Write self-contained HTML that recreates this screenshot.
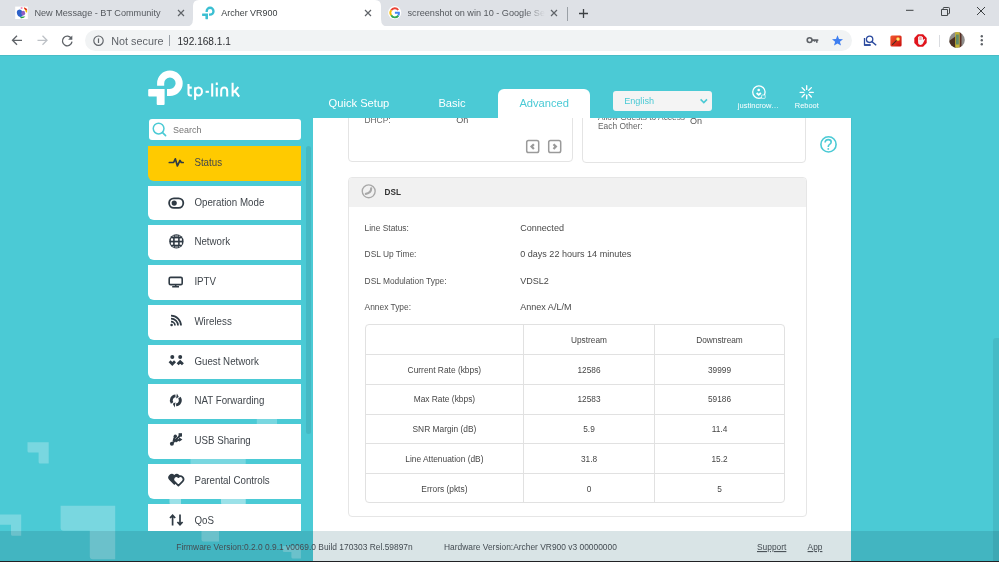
<!DOCTYPE html>
<html><head><meta charset="utf-8"><style>
html,body{margin:0;padding:0;width:999px;height:562px;overflow:hidden;background:#fff}
body{position:relative;font-family:"Liberation Sans",sans-serif}
.t{position:absolute;line-height:1;white-space:nowrap}
.b{position:absolute}
</style></head><body>
<div class="b" style="left:0px;top:0px;width:999px;height:26px;background:#dee1e6"></div>
<svg class="b" style="left:185px;top:0" width="204" height="27" viewBox="0 0 204 27"><path d="M0 27 Q8 27 8 19 L8 6 Q8 0 14 0 L190 0 Q196 0 196 6 L196 19 Q196 27 204 27 Z" fill="#fff"/></svg>
<div class="t" style="left:34.40px;top:9.00px;font-size:9.15px;color:#55595e;transform-origin:0 7px;transform:scaleY(1.06);">New Message - BT Community</div>
<div class="t" style="left:221.30px;top:9.00px;font-size:8.95px;color:#3c4043;transform-origin:0 7px;transform:scaleY(1.06);">Archer VR900</div>
<div class="t" style="left:407.5px;top:9.00px;font-size:9.15px;color:#55595e;width:137px;overflow:hidden;white-space:nowrap;-webkit-mask-image:linear-gradient(90deg,#000 85%,transparent)">screenshot on win 10 - Google Search</div>
<svg class="b" style="left:177px;top:8.5px;" width="8" height="8" viewBox="0 0 8 8"><path d="M1 1L7 7M7 1L1 7" stroke="#5f6368" stroke-width="1.2"/></svg>
<svg class="b" style="left:363.5px;top:8.5px;" width="8" height="8" viewBox="0 0 8 8"><path d="M1 1L7 7M7 1L1 7" stroke="#5f6368" stroke-width="1.2"/></svg>
<svg class="b" style="left:550px;top:8.5px;" width="8" height="8" viewBox="0 0 8 8"><path d="M1 1L7 7M7 1L1 7" stroke="#5f6368" stroke-width="1.2"/></svg>
<svg class="b" style="left:15px;top:6px;" width="13" height="13" viewBox="0 0 13 13"><rect x="0.2" y="0.6" width="12.6" height="12.4" fill="#fff"/><ellipse cx="4.9" cy="7.3" rx="2.9" ry="3.7" fill="#2e62c9" transform="rotate(-18 4.9 7.3)"/><ellipse cx="8.2" cy="7.2" rx="1.9" ry="2.4" fill="#8c5ec4"/><path d="M9.6 1.4 Q12.6 2.6 12.1 6.4 L10.8 6.3 Q10.6 4.2 8.9 2.6Z" fill="#f2c200"/><path d="M9.6 1.4 Q12.3 2.3 12.4 4.3 L10.3 4.0 Q9.7 2.8 8.7 2.1Z" fill="#e02828"/><ellipse cx="6.6" cy="1.9" rx="1.1" ry="0.75" fill="#f060a8"/><path d="M5 11.4 Q7.2 10.1 10.4 10.6 Q8.8 12.5 5.8 12.2Z" fill="#22a244"/></svg>
<svg class="b" style="left:0;top:0" width="260" height="26" viewBox="0 0 260 26"><g transform="translate(202.1 6.6) scale(0.368)"><path d="M12.45 15 V12.5 A9.25 9.25 0 1 1 21.7 21.75 H18.8" stroke="#3bbfd2" stroke-width="6.4" fill="none"/><path d="M1 18.6 H16 V33.2 Q16 34.2 15 34.2 H10 Q9 34.2 9 33.2 V25.3 H1 Q0 25.3 0 24.3 V19.6 Q0 18.6 1 18.6Z" fill="#3bbfd2"/></g></svg>
<svg class="b" style="left:388px;top:6px;" width="14" height="14" viewBox="0 0 14 14"><circle cx="6.7" cy="6.7" r="6.6" fill="#fff"/><path d="M10.2 4.0 A4.2 4.2 0 0 0 3.2 4.2" stroke="#ea4335" stroke-width="1.9" fill="none"/><path d="M3.2 4.2 A4.2 4.2 0 0 0 3.2 9.2" stroke="#fbbc05" stroke-width="1.9" fill="none"/><path d="M3.2 9.2 A4.2 4.2 0 0 0 10.3 9.6" stroke="#34a853" stroke-width="1.9" fill="none"/><path d="M10.3 9.6 A4.2 4.2 0 0 0 10.9 6.7 H6.9" stroke="#4285f4" stroke-width="1.9" fill="none"/></svg>
<div class="b" style="left:566.5px;top:7px;width:1px;height:14px;background:#9aa0a6"></div>
<svg class="b" style="left:578px;top:8px;" width="11" height="11" viewBox="0 0 11 11"><path d="M5.5 1V10M1 5.5H10" stroke="#3c4043" stroke-width="1.3"/></svg>
<svg class="b" style="left:905px;top:8px;" width="10" height="5" viewBox="0 0 10 5"><path d="M1 2.3H8.5" stroke="#3c4043" stroke-width="1"/></svg>
<svg class="b" style="left:940px;top:6px;" width="11" height="11" viewBox="0 0 11 11"><path d="M1.5 3.5H7.5V9.5H1.5Z M3.2 3.5 V2.3 Q3.2 1.5 4 1.5 H8.7 Q9.5 1.5 9.5 2.3 V7 Q9.5 7.8 8.7 7.8 H7.5" stroke="#3c4043" stroke-width="0.95" fill="none"/></svg>
<svg class="b" style="left:976px;top:6px;" width="10" height="10" viewBox="0 0 10 10"><path d="M1 1L9 9M9 1L1 9" stroke="#3c4043" stroke-width="1"/></svg>
<div class="b" style="left:0px;top:26px;width:999px;height:29px;background:#fff"></div>
<div class="b" style="left:84.5px;top:30.2px;width:767px;height:21px;background:#f1f3f4;border-radius:10.5px"></div>
<div class="t" style="left:111.30px;top:36.00px;font-size:10.8px;color:#5f6368;transform-origin:0 9px;transform:scaleY(1.06);">Not secure</div>
<div class="b" style="left:169px;top:34.5px;width:1px;height:11.5px;background:#9aa0a6"></div>
<div class="t" style="left:177.50px;top:37.00px;font-size:10.1px;color:#2a2c30;transform-origin:0 8px;transform:scaleY(1.06);">192.168.1.1</div>
<svg class="b" style="left:10px;top:33px;" width="15" height="15" viewBox="0 0 15 15"><path d="M12 7.3 H3 M7 2.8 L2.5 7.3 L7 11.8" stroke="#5f6368" stroke-width="1.3" fill="none"/></svg>
<svg class="b" style="left:35px;top:33px;" width="15" height="15" viewBox="0 0 15 15"><path d="M2.5 7.3 H11.5 M7.5 2.8 L12 7.3 L7.5 11.8" stroke="#bdc1c6" stroke-width="1.3" fill="none"/></svg>
<svg class="b" style="left:60px;top:33px;" width="15" height="15" viewBox="0 0 15 15"><path d="M11.4 5.6 A4.8 4.8 0 1 0 12 8.6" stroke="#5f6368" stroke-width="1.3" fill="none"/><path d="M12.3 2.6 V6.8 H8.1 Z" fill="#5f6368"/></svg>
<svg class="b" style="left:92px;top:34px;" width="13" height="13" viewBox="0 0 13 13"><circle cx="6.5" cy="6.7" r="4.7" stroke="#5f6368" stroke-width="1.15" fill="none"/><path d="M6.5 4.4 V9" stroke="#5f6368" stroke-width="1.2"/></svg>
<svg class="b" style="left:805px;top:35px;" width="15" height="10" viewBox="0 0 15 10"><circle cx="4.6" cy="5.1" r="2.4" stroke="#5f6368" stroke-width="1.6" fill="none"/><path d="M7 5.1 H13.3 M11.8 5.1 V7.7 M9.6 5.1 V6.8" stroke="#5f6368" stroke-width="1.6" fill="none"/></svg>
<svg class="b" style="left:831px;top:34px;" width="13" height="13" viewBox="0 0 13 13"><path d="M6.5 1.3 L8.0 5.0 L12.0 5.2 L8.9 7.7 L10.0 11.6 L6.5 9.4 L3.0 11.6 L4.1 7.7 L1.0 5.2 L5.0 5.0 Z" fill="#3e7ef0"/></svg>
<svg class="b" style="left:862px;top:34px;" width="17" height="14" viewBox="0 0 17 14"><path d="M2.5 4 V10.8 H8.5" stroke="#2b4a9e" stroke-width="1.3" fill="none"/><path d="M2.2 11.1 H8.6" stroke="#2b4a9e" stroke-width="1.6"/><circle cx="7.6" cy="5.3" r="3.2" stroke="#2b4a9e" stroke-width="1.3" fill="none"/><path d="M9.9 7.6 L14.2 11.2" stroke="#2b4a9e" stroke-width="1.4"/></svg>
<svg class="b" style="left:889.5px;top:34.5px;" width="12" height="12" viewBox="0 0 12 12"><defs><linearGradient id="wg" x1="0" y1="0" x2="1" y2="1"><stop offset="0" stop-color="#f25a30"/><stop offset="1" stop-color="#c80c0c"/></linearGradient><radialGradient id="sg"><stop offset="0" stop-color="#fffbe0"/><stop offset=".5" stop-color="#ffd040"/><stop offset="1" stop-color="#ffd040" stop-opacity="0"/></radialGradient></defs><rect x="0.4" y="0.4" width="11.2" height="11.2" rx="1.5" fill="url(#wg)"/><path d="M2.3 9.7 L7.2 4.8" stroke="#3a2a20" stroke-width="1.3" stroke-dasharray="1 .4"/><circle cx="8" cy="4.1" r="2.4" fill="url(#sg)"/></svg>
<svg class="b" style="left:914px;top:34px;" width="13" height="13" viewBox="0 0 13 13"><path d="M3.9 0.3 H9.1 L12.7 3.9 V9.1 L9.1 12.7 H3.9 L0.3 9.1 V3.9 Z" fill="#e0141c"/><g fill="#f4f6f8"><rect x="4.1" y="2.6" width="1.15" height="5" rx=".55"/><rect x="5.35" y="1.8" width="1.15" height="5.5" rx=".55"/><rect x="6.6" y="2.0" width="1.15" height="5.3" rx=".55"/><rect x="7.85" y="2.8" width="1.1" height="4.8" rx=".55"/><path d="M4.1 6 H8.95 L10.2 4.9 Q10.9 4.5 11 5.2 L9.4 8.6 Q8.6 10.8 6.7 10.9 Q4.1 10.9 4.1 8.2Z"/></g></svg>
<div class="b" style="left:939px;top:34.5px;width:1px;height:12px;background:#dadce0"></div>
<svg class="b" style="left:949px;top:32.4px;" width="16" height="16" viewBox="0 0 16 16"><defs><clipPath id="av"><circle cx="8" cy="7.9" r="7.8"/></clipPath></defs><g clip-path="url(#av)"><rect width="16" height="16" fill="#8e8c8a"/><path d="M0 9 L7 4 V16 H0Z" fill="#4a3022"/><rect x="10.5" y="0" width="2" height="16" fill="#5a3026"/><rect x="6.2" y="0" width="4.4" height="16" fill="#c4b236"/><rect x="7" y="2.5" width="2.8" height="10" fill="#5f8a6a"/></g></svg>
<svg class="b" style="left:979px;top:34px;" width="6" height="13" viewBox="0 0 6 13"><circle cx="2.8" cy="2.3" r="1.2" fill="#5f6368"/><circle cx="2.8" cy="6.3" r="1.2" fill="#5f6368"/><circle cx="2.8" cy="10.3" r="1.2" fill="#5f6368"/></svg>
<div class="b" style="left:0px;top:55px;width:999px;height:507px;background:#4bcad5"></div>
<div class="b" style="left:0px;top:55px;width:999px;height:1px;background:#48bcc6"></div>
<svg class="b" style="left:0;top:0" width="999" height="562" viewBox="0 0 999 562"><path d="M27.5 442.2 H48.7 V463.6 H40.1 Q38.6 463.6 38.6 462.1 V452.4 H29.0 Q27.5 452.4 27.5 450.9 Z" fill="rgba(255,255,255,0.26)"/><path d="M-5 514.6 H21.2 V535.8 H12.5 Q11 535.8 11 534.3 V524.8 H-3.5 Q-5 524.8 -5 523.3 Z" fill="rgba(255,255,255,0.26)"/><path d="M60.6 505.7 H115.2 V559.3 H92.8 Q89.8 559.3 89.8 556.3 V530.8 H63.6 Q60.6 530.8 60.6 527.8 Z" fill="rgba(255,255,255,0.26)"/><rect x="256.8" y="410" width="20.2" height="14" fill="rgba(255,255,255,0.26)"/><rect x="190.5" y="452" width="55.2" height="14" fill="rgba(255,255,255,0.26)"/><path d="M169.5 490 H181 V504.3 H169.5 Q169.5 504.3 169.5 504.3 V504.3 H169.5 Q169.5 504.3 169.5 504.3 Z" fill="rgba(255,255,255,0.26)"/><path d="M221 490 H245.7 V504.3 H221 Q221 504.3 221 504.3 V504.3 H221 Q221 504.3 221 504.3 Z" fill="rgba(255,255,255,0.26)"/><path d="M169.5 490 H181 V504.3 H171.5 Q169.5 504.3 169.5 502.3Z M221 490 H245.7 V504.3 H223 Q221 504.3 221 502.3Z" fill="rgba(255,255,255,0.26)"/><path d="M201.5 520 H219 V541.6 H203.5 Q201.5 541.6 201.5 539.6Z" fill="rgba(255,255,255,0.26)"/><path d="M282.8 546 H300.9 V558.6 H292.9 Q291.4 558.6 291.4 557.1 V552 H284.3 Q282.8 552 282.8 550.5 Z" fill="rgba(255,255,255,0.26)"/></svg>
<div class="b" style="left:149px;top:119px;width:151.7px;height:21.4px;background:#fff;border-radius:3px"></div>
<div class="t" style="left:172.90px;top:126.00px;font-size:9.0px;color:#777;transform-origin:0 7px;transform:scaleY(1.06);">Search</div>
<svg class="b" style="left:148px;top:118px;" width="22" height="22" viewBox="0 0 22 22"><circle cx="10.6" cy="10.6" r="5.35" stroke="#4bcad5" stroke-width="1.5" fill="none"/><path d="M14.6 14.6 L17.6 17.6" stroke="#4bcad5" stroke-width="1.6" stroke-linecap="round"/></svg>
<div class="b" style="left:0;top:0;width:313px;height:531px;overflow:hidden">
<div class="b" style="left:148.3px;top:145.9px;width:152.9px;height:34.7px;background:#ffca00;border-bottom-left-radius:6px"></div>
<div class="t" style="left:194.40px;top:158.00px;font-size:9.75px;color:#40464c;transform-origin:0 8px;transform:scaleY(1.12);">Status</div>
<div class="b" style="left:148.3px;top:185.64px;width:152.9px;height:34.7px;background:#fff;border-bottom-left-radius:6px"></div>
<div class="t" style="left:194.40px;top:198.00px;font-size:9.75px;color:#40464c;transform-origin:0 8px;transform:scaleY(1.12);">Operation Mode</div>
<div class="b" style="left:148.3px;top:225.38px;width:152.9px;height:34.7px;background:#fff;border-bottom-left-radius:6px"></div>
<div class="t" style="left:194.40px;top:237.00px;font-size:9.75px;color:#40464c;transform-origin:0 8px;transform:scaleY(1.12);">Network</div>
<div class="b" style="left:148.3px;top:265.12px;width:152.9px;height:34.7px;background:#fff;border-bottom-left-radius:6px"></div>
<div class="t" style="left:194.40px;top:277.00px;font-size:9.75px;color:#40464c;transform-origin:0 8px;transform:scaleY(1.12);">IPTV</div>
<div class="b" style="left:148.3px;top:304.86px;width:152.9px;height:34.7px;background:#fff;border-bottom-left-radius:6px"></div>
<div class="t" style="left:194.40px;top:317.00px;font-size:9.75px;color:#40464c;transform-origin:0 8px;transform:scaleY(1.12);">Wireless</div>
<div class="b" style="left:148.3px;top:344.6px;width:152.9px;height:34.7px;background:#fff;border-bottom-left-radius:6px"></div>
<div class="t" style="left:194.40px;top:357.00px;font-size:9.75px;color:#40464c;transform-origin:0 8px;transform:scaleY(1.12);">Guest Network</div>
<div class="b" style="left:148.3px;top:384.34px;width:152.9px;height:34.7px;background:#fff;border-bottom-left-radius:6px"></div>
<div class="t" style="left:194.40px;top:396.00px;font-size:9.75px;color:#40464c;transform-origin:0 8px;transform:scaleY(1.12);">NAT Forwarding</div>
<div class="b" style="left:148.3px;top:424.08px;width:152.9px;height:34.7px;background:#fff;border-bottom-left-radius:6px"></div>
<div class="t" style="left:194.40px;top:436.00px;font-size:9.75px;color:#40464c;transform-origin:0 8px;transform:scaleY(1.12);">USB Sharing</div>
<div class="b" style="left:148.3px;top:463.82px;width:152.9px;height:34.7px;background:#fff;border-bottom-left-radius:6px"></div>
<div class="t" style="left:194.40px;top:476.00px;font-size:9.75px;color:#40464c;transform-origin:0 8px;transform:scaleY(1.12);">Parental Controls</div>
<div class="b" style="left:148.3px;top:503.56px;width:152.9px;height:34.7px;background:#fff;border-bottom-left-radius:6px"></div>
<div class="t" style="left:194.40px;top:516.00px;font-size:9.75px;color:#40464c;transform-origin:0 8px;transform:scaleY(1.12);">QoS</div>
<svg class="b" style="left:0;top:0" width="313" height="531" viewBox="0 0 313 531"><path d="M169.3 162.5 H173.6 L175.3 158.8 L177.4 166 L180 160.4 L181.3 162.5 H183.2" stroke="#2f3a44" stroke-width="1.7" fill="none" stroke-linejoin="round" stroke-linecap="round"/><rect x="169.1" y="198.3" width="14.2" height="9.6" rx="4.8" stroke="#2f3a44" stroke-width="1.8" fill="none"/><circle cx="174.2" cy="203.1" r="2.6" fill="#2f3a44"/><circle cx="176.4" cy="241.4" r="7.2" fill="#2f3a44"/><g fill="#fff"><rect x="170.9" y="238.4" width="2.2" height="2.3"/><rect x="174.7" y="238.4" width="3.4" height="2.3"/><rect x="179.7" y="238.4" width="2.2" height="2.3"/><rect x="170.9" y="242.4" width="2.2" height="2.3"/><rect x="174.7" y="242.4" width="3.4" height="2.3"/><rect x="179.7" y="242.4" width="2.2" height="2.3"/><rect x="172.5" y="235.6" width="1.5" height="1.2" opacity=".6"/><rect x="174.8" y="235.4" width="3.2" height="1.2" opacity=".6"/><rect x="178.8" y="235.6" width="1.5" height="1.2" opacity=".6"/><rect x="172.5" y="246.2" width="1.5" height="1.2" opacity=".6"/><rect x="174.8" y="246.4" width="3.2" height="1.2" opacity=".6"/><rect x="178.8" y="246.2" width="1.5" height="1.2" opacity=".6"/></g><rect x="169.2" y="277.4" width="13" height="7.2" rx="1.4" stroke="#2f3a44" stroke-width="1.6" fill="none"/><path d="M175.7 285 V286.5 M172.2 286.7 H179" stroke="#2f3a44" stroke-width="1.5"/><circle cx="171.6" cy="325" r="1.3" fill="#2f3a44"/><path d="M171 321.6 A4 4 0 0 1 175 325.6 M171 318.6 A7 7 0 0 1 178 325.6 M171 315.6 A10 10 0 0 1 181 325.6" stroke="#2f3a44" stroke-width="1.7" fill="none"/><circle cx="172.3" cy="356.9" r="2" fill="#2f3a44"/><circle cx="180.2" cy="356.9" r="2" fill="#2f3a44"/><path d="M169.6 361.3 L172.3 364 L175 361.3 M177.6 364.3 L180.2 361.7 L182.9 364.3" stroke="#2f3a44" stroke-width="2.8" fill="none"/><path d="M172.11 402.98 A4.5 4.5 0 0 1 175.49 395.91 M179.35 397.63 A4.5 4.5 0 0 1 176.11 404.89" stroke="#2f3a44" stroke-width="2.9" fill="none"/><path d="M176.10 398.52 L176.91 393.39 L178.81 397.06Z M175.50 402.28 L174.69 407.41 L172.79 403.74Z" fill="#2f3a44"/><circle cx="171.9" cy="443.7" r="2" fill="#2f3a44"/><path d="M172.4 443.2 L180.2 435.3 M173.4 441.6 Q173.8 438.5 175.2 436.6 M175.4 441.6 Q177.5 440.2 179.8 439.6" stroke="#2f3a44" stroke-width="1.9" fill="none"/><rect x="178.6" y="433.2" width="3.4" height="3.4" fill="#2f3a44"/><circle cx="175.3" cy="436.2" r="1.7" fill="#2f3a44"/><path d="M179 437.2 L182.4 439.4 L179.2 441.8Z" fill="#2f3a44"/><path d="M174.30 484.95 L169.35 480.00 A3.50 3.50 0 0 1 174.30 475.05 A3.50 3.50 0 0 1 179.25 480.00 Z" fill="#2f3a44"/><path d="M178.40 485.54 L174.16 481.30 A3.00 3.00 0 0 1 178.40 477.06 A3.00 3.00 0 0 1 182.64 481.30 Z" fill="#fff" stroke="#2f3a44" stroke-width="1.7" stroke-linejoin="round"/><path d="M172.6 525.5 V515.5 M170 518 L172.6 515.3 L175.2 518 M180 514.4 V524.4 M177.4 522 L180 524.7 L182.6 522" stroke="#2f3a44" stroke-width="1.7" fill="none"/></svg>
</div>
<div class="b" style="left:305.5px;top:146px;width:5.8px;height:287.5px;background:#44b9c4;border-radius:3px"></div>
<div class="b" style="left:313px;top:118px;width:538px;height:413px;background:#fff"></div>
<div class="b" style="left:851px;top:118px;width:1px;height:413px;background:#45c2cd"></div>
<div class="b" style="left:498.4px;top:89px;width:91.6px;height:32px;background:#fff;border-radius:6px 6px 0 0"></div>
<div class="t" style="left:328.60px;top:98.00px;font-size:11.15px;color:#fff;transform-origin:0 9px;transform:scaleY(1.04);">Quick Setup</div>
<div class="t" style="left:438.40px;top:98.00px;font-size:11.15px;color:#fff;transform-origin:0 9px;transform:scaleY(1.04);">Basic</div>
<div class="t" style="left:519.40px;top:98.00px;font-size:11.15px;color:#4bcad5;transform-origin:0 9px;transform:scaleY(1.04);">Advanced</div>
<div class="b" style="left:613.4px;top:90.6px;width:98.3px;height:20px;background:#f4f4f4;border-radius:3px"></div>
<div class="t" style="left:624.20px;top:97.00px;font-size:9.1px;color:#4bcad5;transform-origin:0 7px;transform:scaleY(1.06);">English</div>
<div class="t" style="left:737.80px;top:102.00px;font-size:7.55px;color:#fff;transform-origin:0 6px;transform:scaleY(1.06);">justincrow…</div>
<div class="t" style="left:794.80px;top:102.00px;font-size:7.45px;color:#fff;transform-origin:0 6px;transform:scaleY(1.06);">Reboot</div>
<svg class="b" style="left:0;top:0" width="260" height="112" viewBox="0 0 260 112"><path d="M160.65 85.8 V83.3 A9.25 9.25 0 1 1 169.9 92.55 H167" stroke="#fff" stroke-width="7.1" fill="none"/><path d="M149.2 89 H164.6 V104 Q164.6 105 163.6 105 H157.7 Q156.7 105 156.7 104 V96.5 H149.2 Q148.2 96.5 148.2 95.5 V90 Q148.2 89 149.2 89Z" fill="#fff"/><g stroke="#fff" stroke-width="2.05" fill="none"><path d="M188.5 84 V93.6 Q188.5 95.45 190.4 95.45 H191.9 M188.5 87.6 H191.8"/><path d="M195.1 87.3 V99.9"/><ellipse cx="198.5" cy="91.5" rx="3.45" ry="3.95"/><path d="M205.6 91.8 H208.9"/><path d="M212.2 83.4 V96.6"/><path d="M216.8 87.4 V96.6 M216.8 82.5 V84.9"/><path d="M221.2 96.6 V91 Q221.2 87.5 224.2 87.5 Q227.2 87.5 227.2 91 V96.6"/><path d="M232.6 82.8 V96.6 M233.3 92.6 L238.4 87 M234.8 90.8 L239.2 96.6"/></g></svg>
<svg class="b" style="left:748px;top:82px;" width="24" height="20" viewBox="0 0 24 20"><circle cx="10.9" cy="10.1" r="6.2" stroke="#fff" stroke-width="1.3" fill="none"/><circle cx="10.7" cy="8" r="1.3" fill="#fff"/><path d="M8.6 11 L10.7 12.9 L12.9 11" stroke="#fff" stroke-width="1.8" fill="none"/><rect x="13.6" y="13" width="3.6" height="3.4" rx="0.6" fill="#4bcad5" stroke="rgba(255,255,255,.75)" stroke-width="0.9"/></svg>
<svg class="b" style="left:796px;top:82px;" width="22" height="20" viewBox="0 0 22 20"><g stroke="#fff" stroke-width="1.35" stroke-linecap="round"><path d="M13.60 10.30 L17.30 10.30"/><path d="M12.75 12.35 L15.37 14.97"/><path d="M10.70 13.20 L10.70 16.90"/><path d="M8.65 12.35 L6.03 14.97"/><path d="M7.80 10.30 L4.10 10.30"/><path d="M8.65 8.25 L6.03 5.63"/><path d="M10.70 7.40 L10.70 3.70"/><path d="M12.75 8.25 L15.37 5.63"/></g></svg>
<svg class="b" style="left:698px;top:96px;" width="12" height="10" viewBox="0 0 12 10"><path d="M2.6 3.4 L5.8 6.6 L9 3.4" stroke="#4bcad5" stroke-width="1.6" fill="none"/></svg>
<div class="b" style="left:0;top:118px;width:999px;height:60px;overflow:hidden"><div class="b" style="left:0;top:-118px;width:999px;height:200px">
<div class="b" style="left:347.9px;top:58px;width:225.6px;height:103.5px;border:1px solid #e4e4e4;border-radius:4px;box-sizing:border-box"></div>
<div class="b" style="left:582.2px;top:58px;width:224.3px;height:104.5px;border:1px solid #e4e4e4;border-radius:4px;box-sizing:border-box"></div>
<div class="t" style="left:364.50px;top:116.00px;font-size:8.4px;color:#666;transform-origin:0 7px;transform:scaleY(1.06);">DHCP:</div>
<div class="t" style="left:456.30px;top:116.00px;font-size:9.05px;color:#555;transform-origin:0 7px;transform:scaleY(1.06);">On</div>
<div class="t" style="left:598.00px;top:113.00px;font-size:8.4px;color:#666;transform-origin:0 7px;transform:scaleY(1.06);">Allow Guests to Access</div>
<div class="t" style="left:598.00px;top:122.00px;font-size:8.4px;color:#666;transform-origin:0 7px;transform:scaleY(1.06);">Each Other:</div>
<div class="t" style="left:690.00px;top:117.00px;font-size:9.05px;color:#555;transform-origin:0 7px;transform:scaleY(1.06);">On</div>
</div></div>
<svg class="b" style="left:816px;top:132px;" width="24" height="24" viewBox="0 0 24 24"><circle cx="12.5" cy="12.4" r="7.6" stroke="#4bcad5" stroke-width="1.6" fill="none"/><path d="M9.1 10.6 Q9.1 7.6 12.3 7.6 Q15.2 7.6 15.2 10.1 Q15.2 11.7 13.4 12.6 Q12.3 13.2 12.3 14.4 V15" stroke="#4bcad5" stroke-width="1.6" fill="none"/><circle cx="12.3" cy="16.9" r="0.95" fill="#4bcad5"/></svg>
<svg class="b" style="left:525.2px;top:139.4px;" width="15" height="15" viewBox="0 0 15 15"><rect x="1.7" y="1.6" width="12" height="12" rx="1.8" stroke="#9a9a9a" stroke-width="1.5" fill="#fff"/><path d="M8.9 5.2 L6.5 7.6 L8.9 10" stroke="#9a9a9a" stroke-width="2.2" fill="none"/></svg>
<svg class="b" style="left:547.0px;top:139.4px;" width="15" height="15" viewBox="0 0 15 15"><rect x="1.7" y="1.6" width="12" height="12" rx="1.8" stroke="#9a9a9a" stroke-width="1.5" fill="#fff"/><path d="M6.5 5.2 L8.9 7.6 L6.5 10" stroke="#9a9a9a" stroke-width="2.2" fill="none"/></svg>
<div class="b" style="left:347.9px;top:177.2px;width:458.9px;height:339.6px;border:1px solid #e6e6e6;border-radius:4px;box-sizing:border-box"></div>
<div class="b" style="left:348.9px;top:178.2px;width:456.9px;height:28.5px;background:#f1f1f1;border-radius:3px 3px 0 0"></div>
<div class="t" style="left:384.60px;top:189.00px;font-size:8.2px;color:#333;font-weight:bold;transform-origin:0 6px;transform:scaleY(1.06);">DSL</div>
<svg class="b" style="left:358px;top:181px;" width="22" height="22" viewBox="0 0 22 22"><circle cx="10.7" cy="10.3" r="6.45" stroke="#a8a8a8" stroke-width="1.35" fill="none"/><path d="M13.2 7.3 Q13.2 12 7.8 12.9" stroke="#a8a8a8" stroke-width="2.1" fill="none" stroke-linecap="round"/></svg>
<div class="t" style="left:364.60px;top:224.00px;font-size:8.4px;color:#505050;transform-origin:0 7px;transform:scaleY(1.06);">Line Status:</div>
<div class="t" style="left:520.20px;top:224.00px;font-size:9.05px;color:#484848;transform-origin:0 7px;transform:scaleY(1.06);">Connected</div>
<div class="t" style="left:364.60px;top:250.00px;font-size:8.4px;color:#505050;transform-origin:0 7px;transform:scaleY(1.06);">DSL Up Time:</div>
<div class="t" style="left:520.20px;top:250.00px;font-size:9.05px;color:#484848;transform-origin:0 7px;transform:scaleY(1.06);">0 days 22 hours 14 minutes</div>
<div class="t" style="left:364.60px;top:277.00px;font-size:8.4px;color:#505050;transform-origin:0 7px;transform:scaleY(1.06);">DSL Modulation Type:</div>
<div class="t" style="left:520.20px;top:277.00px;font-size:9.05px;color:#484848;transform-origin:0 7px;transform:scaleY(1.06);">VDSL2</div>
<div class="t" style="left:364.60px;top:303.00px;font-size:8.4px;color:#505050;transform-origin:0 7px;transform:scaleY(1.06);">Annex Type:</div>
<div class="t" style="left:520.20px;top:303.00px;font-size:9.05px;color:#484848;transform-origin:0 7px;transform:scaleY(1.06);">Annex A/L/M</div>
<div class="b" style="left:365.3px;top:324.3px;width:420px;height:178.3px;border:1px solid #e1e1e1;border-radius:4px;box-sizing:border-box"></div>
<div class="b" style="left:365.3px;top:354.1px;width:420px;height:1px;background:#e1e1e1"></div>
<div class="b" style="left:365.3px;top:384px;width:420px;height:1px;background:#e1e1e1"></div>
<div class="b" style="left:365.3px;top:413.6px;width:420px;height:1px;background:#e1e1e1"></div>
<div class="b" style="left:365.3px;top:443.3px;width:420px;height:1px;background:#e1e1e1"></div>
<div class="b" style="left:365.3px;top:473.3px;width:420px;height:1px;background:#e1e1e1"></div>
<div class="b" style="left:523px;top:324.3px;width:1px;height:178.3px;background:#e1e1e1"></div>
<div class="b" style="left:654px;top:324.3px;width:1px;height:178.3px;background:#e1e1e1"></div>
<div class="t" style="left:389.00px;width:400px;text-align:center;top:336.00px;font-size:8.3px;color:#464646;transform-origin:0 7px;transform:scaleY(1.06);">Upstream</div>
<div class="t" style="left:519.50px;width:400px;text-align:center;top:336.00px;font-size:8.3px;color:#464646;transform-origin:0 7px;transform:scaleY(1.06);">Downstream</div>
<div class="t" style="left:244.40px;width:400px;text-align:center;top:366.00px;font-size:8.4px;color:#464646;transform-origin:0 7px;transform:scaleY(1.06);">Current Rate (kbps)</div>
<div class="t" style="left:389.00px;width:400px;text-align:center;top:366.00px;font-size:8.3px;color:#464646;transform-origin:0 7px;transform:scaleY(1.06);">12586</div>
<div class="t" style="left:519.50px;width:400px;text-align:center;top:366.00px;font-size:8.3px;color:#464646;transform-origin:0 7px;transform:scaleY(1.06);">39999</div>
<div class="t" style="left:244.40px;width:400px;text-align:center;top:395.00px;font-size:8.4px;color:#464646;transform-origin:0 7px;transform:scaleY(1.06);">Max Rate (kbps)</div>
<div class="t" style="left:389.00px;width:400px;text-align:center;top:395.00px;font-size:8.3px;color:#464646;transform-origin:0 7px;transform:scaleY(1.06);">12583</div>
<div class="t" style="left:519.50px;width:400px;text-align:center;top:395.00px;font-size:8.3px;color:#464646;transform-origin:0 7px;transform:scaleY(1.06);">59186</div>
<div class="t" style="left:244.40px;width:400px;text-align:center;top:425.00px;font-size:8.4px;color:#464646;transform-origin:0 7px;transform:scaleY(1.06);">SNR Margin (dB)</div>
<div class="t" style="left:389.00px;width:400px;text-align:center;top:425.00px;font-size:8.3px;color:#464646;transform-origin:0 7px;transform:scaleY(1.06);">5.9</div>
<div class="t" style="left:519.50px;width:400px;text-align:center;top:425.00px;font-size:8.3px;color:#464646;transform-origin:0 7px;transform:scaleY(1.06);">11.4</div>
<div class="t" style="left:244.40px;width:400px;text-align:center;top:455.00px;font-size:8.4px;color:#464646;transform-origin:0 7px;transform:scaleY(1.06);">Line Attenuation (dB)</div>
<div class="t" style="left:389.00px;width:400px;text-align:center;top:455.00px;font-size:8.3px;color:#464646;transform-origin:0 7px;transform:scaleY(1.06);">31.8</div>
<div class="t" style="left:519.50px;width:400px;text-align:center;top:455.00px;font-size:8.3px;color:#464646;transform-origin:0 7px;transform:scaleY(1.06);">15.2</div>
<div class="t" style="left:244.40px;width:400px;text-align:center;top:485.00px;font-size:8.4px;color:#464646;transform-origin:0 7px;transform:scaleY(1.06);">Errors (pkts)</div>
<div class="t" style="left:389.00px;width:400px;text-align:center;top:485.00px;font-size:8.3px;color:#464646;transform-origin:0 7px;transform:scaleY(1.06);">0</div>
<div class="t" style="left:519.50px;width:400px;text-align:center;top:485.00px;font-size:8.3px;color:#464646;transform-origin:0 7px;transform:scaleY(1.06);">5</div>
<div class="b" style="left:993.2px;top:338.1px;width:8px;height:230px;background:rgba(0,0,0,0.07);border-radius:3px"></div>
<div class="b" style="left:0px;top:531px;width:999px;height:31px;background:rgba(0,20,40,0.11)"></div>
<div class="b" style="left:313px;top:531px;width:538px;height:31px;background:#d9e4e6"></div>
<div class="t" style="left:176.25px;top:543.00px;font-size:8.42px;color:#444c52;transform-origin:0 7px;transform:scaleY(1.06);">Firmware Version:0.2.0 0.9.1 v0069.0 Build 170303 Rel.59897n</div>
<div class="t" style="left:444.00px;top:543.00px;font-size:8.41px;color:#444c52;transform-origin:0 7px;transform:scaleY(1.06);">Hardware Version:Archer VR900 v3 00000000</div>
<div class="t" style="left:757.00px;top:543.00px;font-size:8.4px;color:#444c52;text-decoration:underline;transform-origin:0 7px;transform:scaleY(1.06);">Support</div>
<div class="t" style="left:807.60px;top:543.00px;font-size:8.32px;color:#444c52;text-decoration:underline;transform-origin:0 7px;transform:scaleY(1.06);">App</div>
<div class="b" style="left:0px;top:560.7px;width:999px;height:1.3px;background:#202124"></div>
</body></html>
